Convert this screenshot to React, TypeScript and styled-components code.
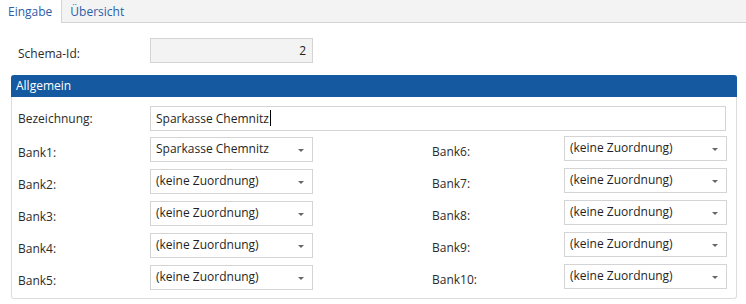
import styled, { createGlobalStyle } from "styled-components";

const GlobalStyle = createGlobalStyle`
  body {
    margin: 0;
    background: #ffffff;
    font-family: "Open Sans", "Noto Sans", sans-serif;
    font-size: 12px;
    color: #2b2b2b;
  }
`;

const leftBanks = [
  { label: "Bank1:", value: "Sparkasse Chemnitz" },
  { label: "Bank2:", value: "(keine Zuordnung)" },
  { label: "Bank3:", value: "(keine Zuordnung)" },
  { label: "Bank4:", value: "(keine Zuordnung)" },
  { label: "Bank5:", value: "(keine Zuordnung)" },
];

const rightBanks = [
  { label: "Bank6:", value: "(keine Zuordnung)" },
  { label: "Bank7:", value: "(keine Zuordnung)" },
  { label: "Bank8:", value: "(keine Zuordnung)" },
  { label: "Bank9:", value: "(keine Zuordnung)" },
  { label: "Bank10:", value: "(keine Zuordnung)" },
];

function Select({ value }: { value: string }) {
  return (
    <SelectBox>
      <span>{value}</span>
      <Arrow />
    </SelectBox>
  );
}

export default function App() {
  return (
    <>
      <GlobalStyle />
      <TabBar>
        <Tab active>Eingabe</Tab>
        <Tab>Übersicht</Tab>
      </TabBar>
      <Content>
        <FieldRow>
          <Label width={139} indent={7} offset>
            Schema-Id:
          </Label>
          <TextBox readOnly width={163}>
            2
          </TextBox>
        </FieldRow>
        <Panel>
          <PanelHeader>Allgemein</PanelHeader>
          <PanelBody>
            <FieldRow>
              <Label width={138} indent={6}>
                Bezeichnung:
              </Label>
              <TextBox>
                Sparkasse Chemnitz
                <Caret />
              </TextBox>
            </FieldRow>
            <Columns>
              <BankColumn>
                {leftBanks.map((b) => (
                  <FieldRow key={b.label}>
                    <Label width={138} indent={6} offset>
                      {b.label}
                    </Label>
                    <Select value={b.value} />
                  </FieldRow>
                ))}
              </BankColumn>
              <BankColumn right>
                {rightBanks.map((b) => (
                  <FieldRow key={b.label}>
                    <Label width={132} indent={0} offset>
                      {b.label}
                    </Label>
                    <Select value={b.value} />
                  </FieldRow>
                ))}
              </BankColumn>
            </Columns>
          </PanelBody>
        </Panel>
      </Content>
    </>
  );
}

const TabBar = styled.div`
  display: flex;
  height: 23px;
  background: #f3f3f3;
  border-bottom: 1px solid #d4d4d4;
  box-sizing: border-box;
`;

const Tab = styled.div<{ active?: boolean }>`
  display: flex;
  align-items: center;
  padding: 0 9px 0 8px;
  height: ${(p) => (p.active ? "23px" : "22px")};
  background: ${(p) => (p.active ? "#ffffff" : "transparent")};
  border-right: ${(p) => (p.active ? "1px solid #d4d4d4" : "none")};
  color: #2d5ea8;
  font-size: 12px;
  box-sizing: border-box;
`;

const Content = styled.div`
  padding: 15px 9px 0 11px;
`;

const FieldRow = styled.div`
  display: flex;
  align-items: center;
`;

const Label = styled.div<{ width: number; indent: number; offset?: boolean }>`
  flex: none;
  width: ${(p) => p.width}px;
  padding-left: ${(p) => p.indent}px;
  padding-top: ${(p) => (p.offset ? "5px" : "0")};
  box-sizing: border-box;
  color: #2b2b2b;
`;

const TextBox = styled.div<{ readOnly?: boolean; width?: number }>`
  display: flex;
  align-items: center;
  justify-content: ${(p) => (p.readOnly ? "flex-end" : "flex-start")};
  width: ${(p) => (p.width ? `${p.width}px` : "auto")};
  flex: ${(p) => (p.width ? "none" : "1")};
  height: 25px;
  padding: 0 6px 1px 5px;
  box-sizing: border-box;
  border: 1px solid #d4d4d4;
  background: ${(p) => (p.readOnly ? "#f3f3f3" : "#ffffff")};
  color: #1f1f1f;
`;

const Caret = styled.span`
  display: inline-block;
  width: 1px;
  height: 16px;
  background: #000;
  margin-left: 1px;
`;

const Panel = styled.div`
  margin-top: 12px;
  border: 1px solid #dcdcdc;
  border-top: none;
  border-radius: 3px;
  height: 224px;
  box-sizing: border-box;
`;

const PanelHeader = styled.div`
  height: 22px;
  line-height: 22px;
  background: #1559a0;
  color: #ffffff;
  padding-left: 5px;
  border-radius: 3px 3px 0 0;
  margin: 0 -1px;
`;

const PanelBody = styled.div`
  padding: 9px 10px 0 0;
`;

const Columns = styled.div`
  display: flex;
  gap: 119px;
  margin-top: 6px;
`;

const BankColumn = styled.div<{ right?: boolean }>`
  display: flex;
  flex-direction: column;
  gap: 7px;
  margin-top: ${(p) => (p.right ? "-1px" : "0")};
`;

const SelectBox = styled.div`
  position: relative;
  display: flex;
  align-items: center;
  width: 163px;
  height: 25px;
  padding: 0 5px 2px;
  box-sizing: border-box;
  border: 1px solid #d4d4d4;
  background: #ffffff;
  color: #1f1f1f;
`;

const Arrow = styled.span`
  position: absolute;
  right: 8px;
  top: 11px;
  width: 0;
  height: 0;
  border-left: 3px solid transparent;
  border-right: 3px solid transparent;
  border-top: 3px solid #666;
`;
